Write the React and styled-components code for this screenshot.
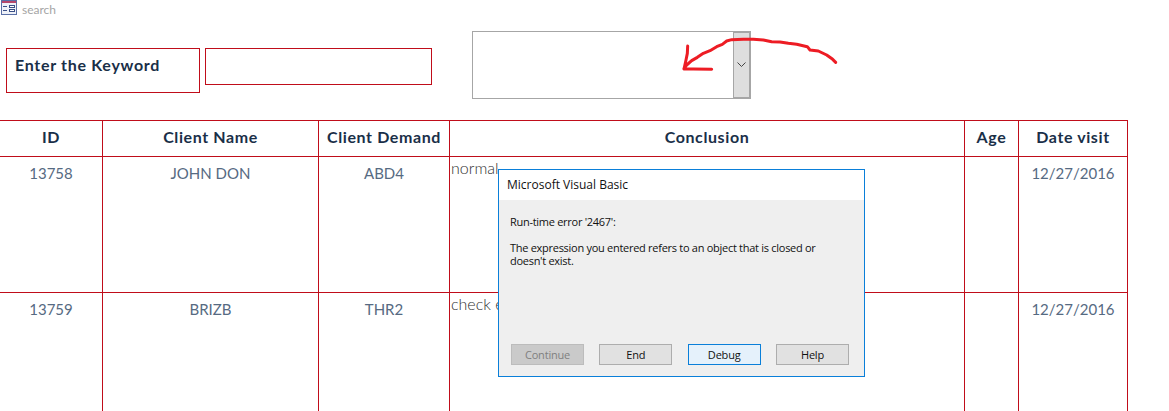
import React from "react"
import styled, { createGlobalStyle } from "styled-components"

const GlobalStyle = createGlobalStyle`
  html, body {
    margin: 0;
    padding: 0;
    background: #fff;
  }
  body {
    font-family: Lato, "Liberation Sans", sans-serif;
    overflow: hidden;
  }
`

const Page = styled.div`
  position: relative;
  width: 1169px;
  height: 411px;
  overflow: hidden;
`

const FormTab = styled.div`
  display: flex;
  align-items: flex-start;
  gap: 5px;
  height: 19px;
  padding: 0 0 0 1px;
  font-size: 12px;
  line-height: 19px;
  color: #a5a5a5;
`

const SearchRow = styled.div`
  display: flex;
  align-items: flex-start;
  height: 89px;
  padding: 12px 0 0 6px;
`

const KeywordLabel = styled.div`
  box-sizing: border-box;
  width: 194px;
  height: 45px;
  margin-top: 17px;
  padding: 6px 8px;
  border: 1px solid #c00d1a;
  font-size: 16px;
  font-weight: 700;
  line-height: 20px;
  letter-spacing: 0.7px;
  color: #1a2f48;
`

const KeywordInput = styled.div`
  box-sizing: border-box;
  width: 227px;
  height: 37px;
  margin: 17px 0 0 5px;
  border: 1px solid #c00d1a;
`

const Combo = styled.div`
  box-sizing: border-box;
  display: flex;
  justify-content: flex-end;
  width: 279px;
  height: 68px;
  margin-left: 40px;
  border: 1px solid #a6a6a6;
`

const ComboButton = styled.div`
  box-sizing: border-box;
  display: flex;
  align-items: center;
  justify-content: center;
  width: 17px;
  border: 1px solid #a6a6a6;
  background: #dedede;
`

const Table = styled.div`
  width: 1128px;
  border-top: 1px solid #c00d1a;
`

const Row = styled.div`
  display: grid;
  grid-template-columns: 103px 216px 131px 515px 54px 109px;
  height: ${(p) => p.$height}px;
`

const HeaderCell = styled.div`
  box-sizing: border-box;
  display: flex;
  align-items: center;
  justify-content: center;
  padding-bottom: 4px;
  border-right: 1px solid #c00d1a;
  border-bottom: 1px solid #c00d1a;
  font-size: 16px;
  font-weight: 700;
  letter-spacing: 0.6px;
  color: #1a2f48;
`

const Cell = styled.div`
  box-sizing: border-box;
  padding: ${(p) => (p.$left ? "0 0 0 1px" : "5px 0 0")};
  border-right: 1px solid #c00d1a;
  border-bottom: ${(p) => (p.$last ? "none" : "1px solid #c00d1a")};
  font-size: ${(p) => (p.$left ? "16px" : "15px")};
  font-weight: ${(p) => (p.$left ? 300 : 400)};
  line-height: 22px;
  text-align: ${(p) => (p.$left ? "left" : "center")};
  color: ${(p) => (p.$left ? "#303030" : "#566a82")};
  white-space: nowrap;
`

const Scribble = styled.svg`
  position: absolute;
  left: 460px;
  top: 20px;
`

const Dialog = styled.div`
  position: absolute;
  left: 498px;
  top: 169px;
  box-sizing: border-box;
  display: flex;
  flex-direction: column;
  width: 367px;
  height: 208px;
  border: 1px solid #0a7fd9;
  background: #efefef;
  font-family: "Open Sans", "Noto Sans", sans-serif;
  font-size: 11px;
  color: #111;
`

const DialogTitle = styled.div`
  height: 30px;
  padding-left: 8px;
  background: #fff;
  font-size: 12px;
  line-height: 30px;
`

const DialogBody = styled.div`
  flex: 1;
  padding: 15px 12px 0 11px;
  line-height: 13px;
  letter-spacing: -0.28px;
`

const Message = styled.p`
  margin: 0 0 13px;
`

const ButtonRow = styled.div`
  display: flex;
  justify-content: space-between;
  padding: 0 15px 11px 12px;
  letter-spacing: -0.2px;
`

const DialogButton = styled.div`
  box-sizing: border-box;
  display: flex;
  align-items: center;
  justify-content: center;
  width: 73px;
  height: 21px;
  border: 1px solid ${(p) => (p.$primary ? "#0a7fd9" : p.$disabled ? "#bcbcbc" : "#adadad")};
  background: ${(p) => (p.$primary ? "#e5f1fb" : p.$disabled ? "#cacaca" : "#e1e1e1")};
  color: ${(p) => (p.$disabled ? "#808080" : "#111")};
`

const FormIcon = () => (
  <svg width="16" height="16" viewBox="0 0 16 16">
    <rect x="0.5" y="0.5" width="15" height="14" fill="#eef1f8" stroke="#5a6fa6" />
    <rect x="1" y="1" width="14" height="2" fill="#b5476c" />
    <path d="M2 6.5h4M2 10.5h4" stroke="#3a4f86" />
    <rect x="8.5" y="5.5" width="5" height="2" fill="#fff" stroke="#3a4f86" />
    <rect x="8.5" y="9.5" width="5" height="2" fill="#fff" stroke="#3a4f86" />
  </svg>
)

const columns = ["ID", "Client Name", "Client Demand", "Conclusion", "Age", "Date visit"]

const rows = [
  { id: "13758", name: "JOHN DON", demand: "ABD4", conclusion: "normal", date: "12/27/2016", height: 136 },
  { id: "13759", name: "BRIZB", demand: "THR2", conclusion: "check e", date: "12/27/2016", height: 118, last: true },
]

export default function App() {
  return (
    <Page>
      <GlobalStyle />
      <FormTab>
        <FormIcon />
        <span>search</span>
      </FormTab>
      <SearchRow>
        <KeywordLabel>Enter the Keyword</KeywordLabel>
        <KeywordInput />
        <Combo>
          <ComboButton>
            <svg width="9" height="6" viewBox="0 0 9 6">
              <path d="M0.5 0.5L4.5 4.5L8.5 0.5" fill="none" stroke="#444" />
            </svg>
          </ComboButton>
        </Combo>
      </SearchRow>
      <Table>
        <Row $height={36}>
          {columns.map((c) => (
            <HeaderCell key={c}>{c}</HeaderCell>
          ))}
        </Row>
        {rows.map((r) => (
          <Row key={r.id} $height={r.height}>
            <Cell $last={r.last}>{r.id}</Cell>
            <Cell $last={r.last}>{r.name}</Cell>
            <Cell $last={r.last}>{r.demand}</Cell>
            <Cell $left $last={r.last}>{r.conclusion}</Cell>
            <Cell $last={r.last} />
            <Cell $last={r.last}>{r.date}</Cell>
          </Row>
        ))}
      </Table>
      <Scribble width="400" height="110" viewBox="0 0 1200 330">
        <path
          d="M1127 127L1118 118L1100 105L1075 93L1050 90L1042 80L1010 73L985 70L960 66L935 65L910 60L880 58L850 58L815 59L800 63L787 73L770 80L750 92L730 100L712 112L695 122L680 135L672 145M683 78L682 100L678 120L672 147L700 147L755 148"
          fill="none"
          stroke="#ed1c24"
          strokeWidth="9"
          strokeLinecap="round"
          strokeLinejoin="round"
        />
      </Scribble>
      <Dialog>
        <DialogTitle>Microsoft Visual Basic</DialogTitle>
        <DialogBody>
          <Message>Run-time error '2467':</Message>
          <Message>
            The expression you entered refers to an object that is closed or
            <br />
            doesn't exist.
          </Message>
        </DialogBody>
        <ButtonRow>
          <DialogButton $disabled>Continue</DialogButton>
          <DialogButton>End</DialogButton>
          <DialogButton $primary>Debug</DialogButton>
          <DialogButton>Help</DialogButton>
        </ButtonRow>
      </Dialog>
    </Page>
  )
}
